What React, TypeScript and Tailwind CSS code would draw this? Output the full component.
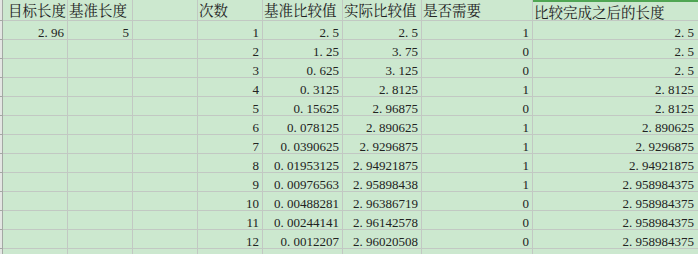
const headers = ["目标长度", "基准长度", "", "次数", "基准比较值", "实际比较值", "是否需要", "比较完成之后的长度"];

const rows: string[][] = [
  ["2.96", "5", "", "1", "2.5", "2.5", "1", "2.5"],
  ["", "", "", "2", "1.25", "3.75", "0", "2.5"],
  ["", "", "", "3", "0.625", "3.125", "0", "2.5"],
  ["", "", "", "4", "0.3125", "2.8125", "1", "2.8125"],
  ["", "", "", "5", "0.15625", "2.96875", "0", "2.8125"],
  ["", "", "", "6", "0.078125", "2.890625", "1", "2.890625"],
  ["", "", "", "7", "0.0390625", "2.9296875", "1", "2.9296875"],
  ["", "", "", "8", "0.01953125", "2.94921875", "1", "2.94921875"],
  ["", "", "", "9", "0.00976563", "2.95898438", "1", "2.958984375"],
  ["", "", "", "10", "0.00488281", "2.96386719", "0", "2.958984375"],
  ["", "", "", "11", "0.00244141", "2.96142578", "0", "2.958984375"],
  ["", "", "", "12", "0.0012207", "2.96020508", "0", "2.958984375"],
  ["", "", "", "", "", "", "", ""],
];

// SimSun-style half-width dot: keep it in its own fixed cell
function Num({ v }: { v: string }) {
  const parts = v.split(".");
  if (parts.length < 2) return <span>{v}</span>;
  return (
    <span>
      {parts[0]}
      <span className="inline-block w-[6.5px] text-left">.</span>
      {parts[1]}
    </span>
  );
}

const font = "font-['Liberation_Serif','Noto_Serif_CJK_SC','Noto_Sans_CJK_SC',serif]";

export default function App() {
  return (
    <div className={`w-[698px] h-[254px] overflow-hidden bg-[#cce8cf] text-[#222] ${font}`}>
      <div className="grid grid-cols-[3px_65px_65px_65px_65px_80px_79px_111px_165px] grid-rows-[21px_repeat(13,19px)]">
        <div className="bg-[#e3e6e3] border-r border-b border-[#a4a8a4]" />
        {headers.map((h, i) => (
          <div
            key={i}
            className={
              "border-r border-b border-[#c2c8c3] text-[14.5px] leading-[20px] whitespace-nowrap " +
              (i === 0 ? "pl-[5px] pt-[1px] " : "pl-[1px] pt-[1px] ") +
              (i === 7 ? "border-t-2 border-t-[#4fa653] pt-0 leading-[19px] border-r-0" : "")
            }
          >
            {h}
          </div>
        ))}
        {rows.map((r, ri) => (
          <div key={ri} className="contents">
            <div className="bg-[#e3e6e3] border-r border-b border-[#a4a8a4]" />
            {r.map((c, ci) => (
              <div
                key={ci}
                className={
                  "border-b border-[#c2c8c3] text-[13px] leading-[19px] pt-[2px] pr-[3px] text-right whitespace-nowrap " +
                  (ci === 7 ? "pr-[4px]" : "border-r")
                }
              >
                {c && <Num v={c} />}
              </div>
            ))}
          </div>
        ))}
      </div>
    </div>
  );
}
